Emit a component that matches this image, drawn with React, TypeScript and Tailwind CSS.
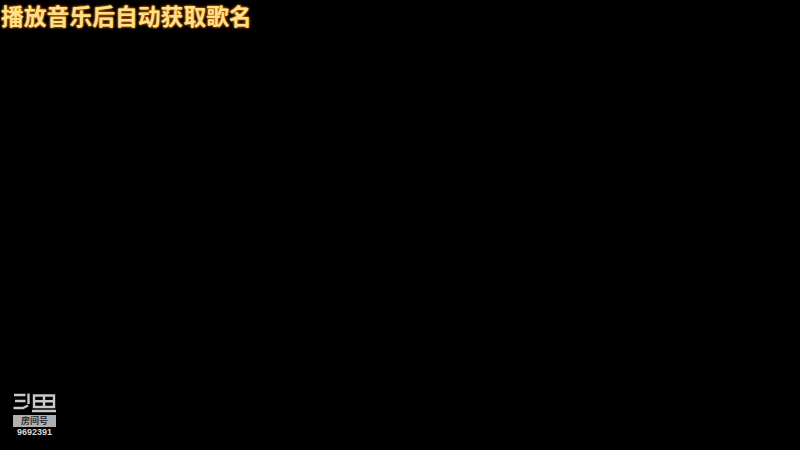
export default function App() {
  return (
    <div className="w-[800px] h-[450px] bg-black flex flex-col justify-between overflow-hidden" style={{ fontFamily: '"Noto Sans CJK SC", sans-serif' }}>
      <div className="pl-[1px] pt-[2px] text-[22.8px] leading-[28px] font-bold text-[#ffe08a] whitespace-nowrap [text-shadow:0_0_2px_#e07f10,0_0_3px_#c96a00]">
        播放音乐后自动获取歌名
      </div>
      <div className="ml-[13px] mb-[13px] w-[43px] flex flex-col items-center">
        <svg width="43" height="20" viewBox="0 0 43 20" fill="none" stroke="#c8c8c8" strokeWidth="2.4">
          <path d="M1 2H12.5M2 8H12.5M0.5 15H10L15 12.5M15.5 11V0.5" />
          <path d="M21 2.5H41V14H21ZM21 8.2H41M31 2.5V14M19 18H43" />
        </svg>
        <div className="mt-[2px] w-[43px] h-[12px] bg-[#b0b0b0] text-[#333] text-[9px] leading-[12px] font-bold text-center">
          房间号
        </div>
        <div className="text-[#d8d8d8] text-[9px] leading-[10px] font-bold [font-family:'Liberation_Sans',sans-serif]">
          9692391
        </div>
      </div>
    </div>
  );
}
